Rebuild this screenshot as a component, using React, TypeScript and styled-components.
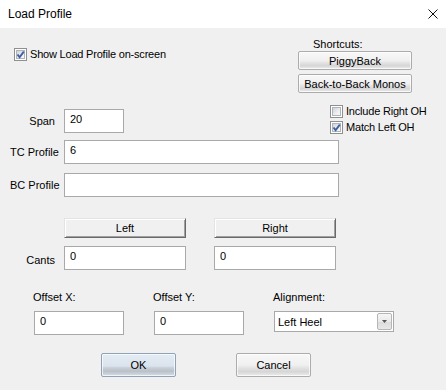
import styled, { createGlobalStyle } from 'styled-components';

const GlobalStyle = createGlobalStyle`
  body {
    margin: 0;
    background: #fff;
  }
  * {
    box-sizing: border-box;
  }
`;

const Window = styled.div`
  width: 446px;
  height: 390px;
  font-family: "Liberation Sans", Arial, sans-serif;
  font-size: 11px;
  color: #000;
  overflow: hidden;
`;

const TitleBar = styled.div`
  height: 28px;
  display: flex;
  align-items: center;
  justify-content: space-between;
  padding: 0 7px 0 8px;
  background: #fff;
  font-size: 12px;
`;

const Body = styled.div`
  height: 362px;
  background: #f0f0f0;
  padding: 10px 0 0 10px;
`;

const TopSection = styled.div`
  display: grid;
  grid-template-columns: 288px 114px;
  align-items: start;
`;

const Column = styled.div`
  display: flex;
  flex-direction: column;
`;

const CheckRow = styled.label<{ $indent?: number; $top?: number }>`
  display: flex;
  align-items: center;
  gap: 3px;
  height: 16px;
  margin-left: ${p => p.$indent ?? 0}px;
  margin-top: ${p => p.$top ?? 0}px;
  white-space: nowrap;
  letter-spacing: -0.2px;
`;

const Box = styled.span`
  flex-shrink: 0;
  width: 13px;
  height: 13px;
  border: 1px solid #8e8f8f;
  background: #fff;
  padding: 1px;
  display: flex;
`;

const BoxInner = styled.span`
  flex: 1;
  border: 1px solid #b0b4ba;
  background: linear-gradient(135deg, #d0d3d8 0%, #eceef0 60%, #f8f8f8 100%);
  position: relative;
`;

const Tick = styled.svg`
  position: absolute;
  left: -2px;
  top: -2px;
`;

const FieldRow = styled.div<{ $top: number }>`
  display: grid;
  grid-template-columns: 45px auto;
  column-gap: 9px;
  align-items: center;
  margin-top: ${p => p.$top}px;
`;

const FieldLabel = styled.span<{ $shift?: number }>`
  text-align: right;
  white-space: nowrap;
  padding-top: ${p => p.$shift ?? 0}px;
`;

const TextBox = styled.input<{ $width: number }>`
  width: ${p => p.$width}px;
  height: 24px;
  border: 1px solid #a9a9a9;
  background: #fff;
  padding: 0 5px 4px;
  font-family: inherit;
  font-size: 11px;
  color: #000;
  outline: none;
`;

const ShortcutsLabel = styled.div`
  line-height: 13px;
  padding-left: 15px;
`;

const SysButton = styled.button<{ $default?: boolean; $width?: number; $height?: number; $top?: number }>`
  width: ${p => p.$width ?? 114}px;
  height: ${p => p.$height ?? 19}px;
  margin-top: ${p => p.$top ?? 0}px;
  padding: 0;
  border: 1px solid ${p => (p.$default ? '#8ea2b8' : '#acacac')};
  border-radius: 2px;
  font-family: inherit;
  font-size: 11px;
  color: #000;
  background: ${p =>
    p.$default
      ? 'linear-gradient(#e3ebf4 0%, #dbe4ee 55%, #c9d0d8 62%, #b9c0c8 78%, #d8dee6 100%)'
      : 'linear-gradient(#f8f8f8 0%, #f0f0f0 50%, #e4e4e4 62%, #d6d6d6 80%, #ececec 100%)'};
  box-shadow: inset 0 0 0 1px rgba(255, 255, 255, 0.7);
`;

const FlatButton = styled.button`
  width: 122px;
  height: 20px;
  padding: 0;
  font-family: inherit;
  font-size: 11px;
  color: #000;
  background: #f0f0f0;
  border: 1px solid;
  border-color: #e3e3e3 #696969 #696969 #e3e3e3;
  box-shadow: inset 1px 1px 0 #fff, inset -1px -1px 0 #a0a0a0;
`;

const Pair = styled.div`
  display: flex;
  gap: 28px;
`;

const OptionList = styled.div`
  margin-top: 10px;
  display: flex;
  flex-direction: column;
`;

const OffsetSection = styled.div`
  display: flex;
  gap: 30px;
  padding-left: 24px;
  margin-top: 21px;
`;

const SmallLabel = styled.div`
  line-height: 13px;
  margin: 0 0 7px -1px;
`;

const Combo = styled.div`
  width: 120px;
  height: 21px;
  border: 1px solid #a9a9a9;
  background: #fff;
  display: flex;
  align-items: center;
`;

const ComboText = styled.span`
  flex: 1;
  padding-left: 3px;
`;

const ComboButton = styled.span`
  width: 15px;
  height: 17px;
  margin-right: 1px;
  border: 1px solid #b6b6b6;
  border-radius: 2px;
  background: linear-gradient(#f6f6f6 0%, #eaeaea 50%, #dcdcdc 55%, #e8e8e8 100%);
  display: flex;
  align-items: center;
  justify-content: center;
`;

const DialogButtons = styled.div`
  display: flex;
  gap: 60px;
  padding-left: 91px;
  margin-top: 18px;
`;

const CheckBox = ({ checked }: { checked?: boolean }) => (
  <Box>
    <BoxInner>
      {checked && (
        <Tick width="11" height="11" viewBox="0 0 11 11">
          <path d="M2.5 5.5 L4.6 8.2 L8.8 2.6" fill="none" stroke="#3f5f9f" strokeWidth="1.9" />
        </Tick>
      )}
    </BoxInner>
  </Box>
);

const App = () => {
  return (
    <Window>
      <GlobalStyle />
      <TitleBar>
        <span>Load Profile</span>
        <svg width="12" height="12" viewBox="0 0 12 12">
          <path d="M1.5 1.5 L10.5 10.5 M10.5 1.5 L1.5 10.5" stroke="#111" strokeWidth="1" />
        </svg>
      </TitleBar>
      <Body>
        <TopSection>
          <Column>
            <CheckRow $indent={4} $top={8}>
              <CheckBox checked />
              Show Load Profile on-screen
            </CheckRow>
            <FieldRow $top={47}>
              <FieldLabel>Span</FieldLabel>
              <TextBox $width={60} defaultValue="20" readOnly />
            </FieldRow>
          </Column>
          <Column>
            <ShortcutsLabel>Shortcuts:</ShortcutsLabel>
            <SysButton>PiggyBack</SysButton>
            <SysButton $top={4}>Back-to-Back Monos</SysButton>
            <OptionList>
              <CheckRow $indent={32}>
                <CheckBox />
                Include Right OH
              </CheckRow>
              <CheckRow $indent={32}>
                <CheckBox checked />
                Match Left OH
              </CheckRow>
            </OptionList>
          </Column>
        </TopSection>

        <FieldRow $top={5}>
          <FieldLabel>TC Profile</FieldLabel>
          <TextBox $width={275} defaultValue="6" readOnly />
        </FieldRow>
        <FieldRow $top={9}>
          <FieldLabel>BC Profile</FieldLabel>
          <TextBox $width={275} defaultValue="" readOnly />
        </FieldRow>

        <FieldRow $top={21}>
          <span />
          <Pair>
            <FlatButton>Left</FlatButton>
            <FlatButton>Right</FlatButton>
          </Pair>
        </FieldRow>
        <FieldRow $top={8}>
          <FieldLabel $shift={4}>Cants</FieldLabel>
          <Pair>
            <TextBox $width={122} defaultValue="0" readOnly />
            <TextBox $width={122} defaultValue="0" readOnly />
          </Pair>
        </FieldRow>

        <OffsetSection>
          <Column>
            <SmallLabel>Offset X:</SmallLabel>
            <TextBox $width={90} defaultValue="0" readOnly />
          </Column>
          <Column>
            <SmallLabel>Offset Y:</SmallLabel>
            <TextBox $width={90} defaultValue="0" readOnly />
          </Column>
          <Column>
            <SmallLabel>Alignment:</SmallLabel>
            <Combo>
              <ComboText>Left Heel</ComboText>
              <ComboButton>
                <svg width="5" height="3" viewBox="0 0 5 3">
                  <path d="M0 0 H5 L2.5 3 Z" fill="#555" />
                </svg>
              </ComboButton>
            </Combo>
          </Column>
        </OffsetSection>

        <DialogButtons>
          <SysButton $default $width={75} $height={24}>OK</SysButton>
          <SysButton $width={75} $height={24}>Cancel</SysButton>
        </DialogButtons>
      </Body>
    </Window>
  );
};

export default App;
